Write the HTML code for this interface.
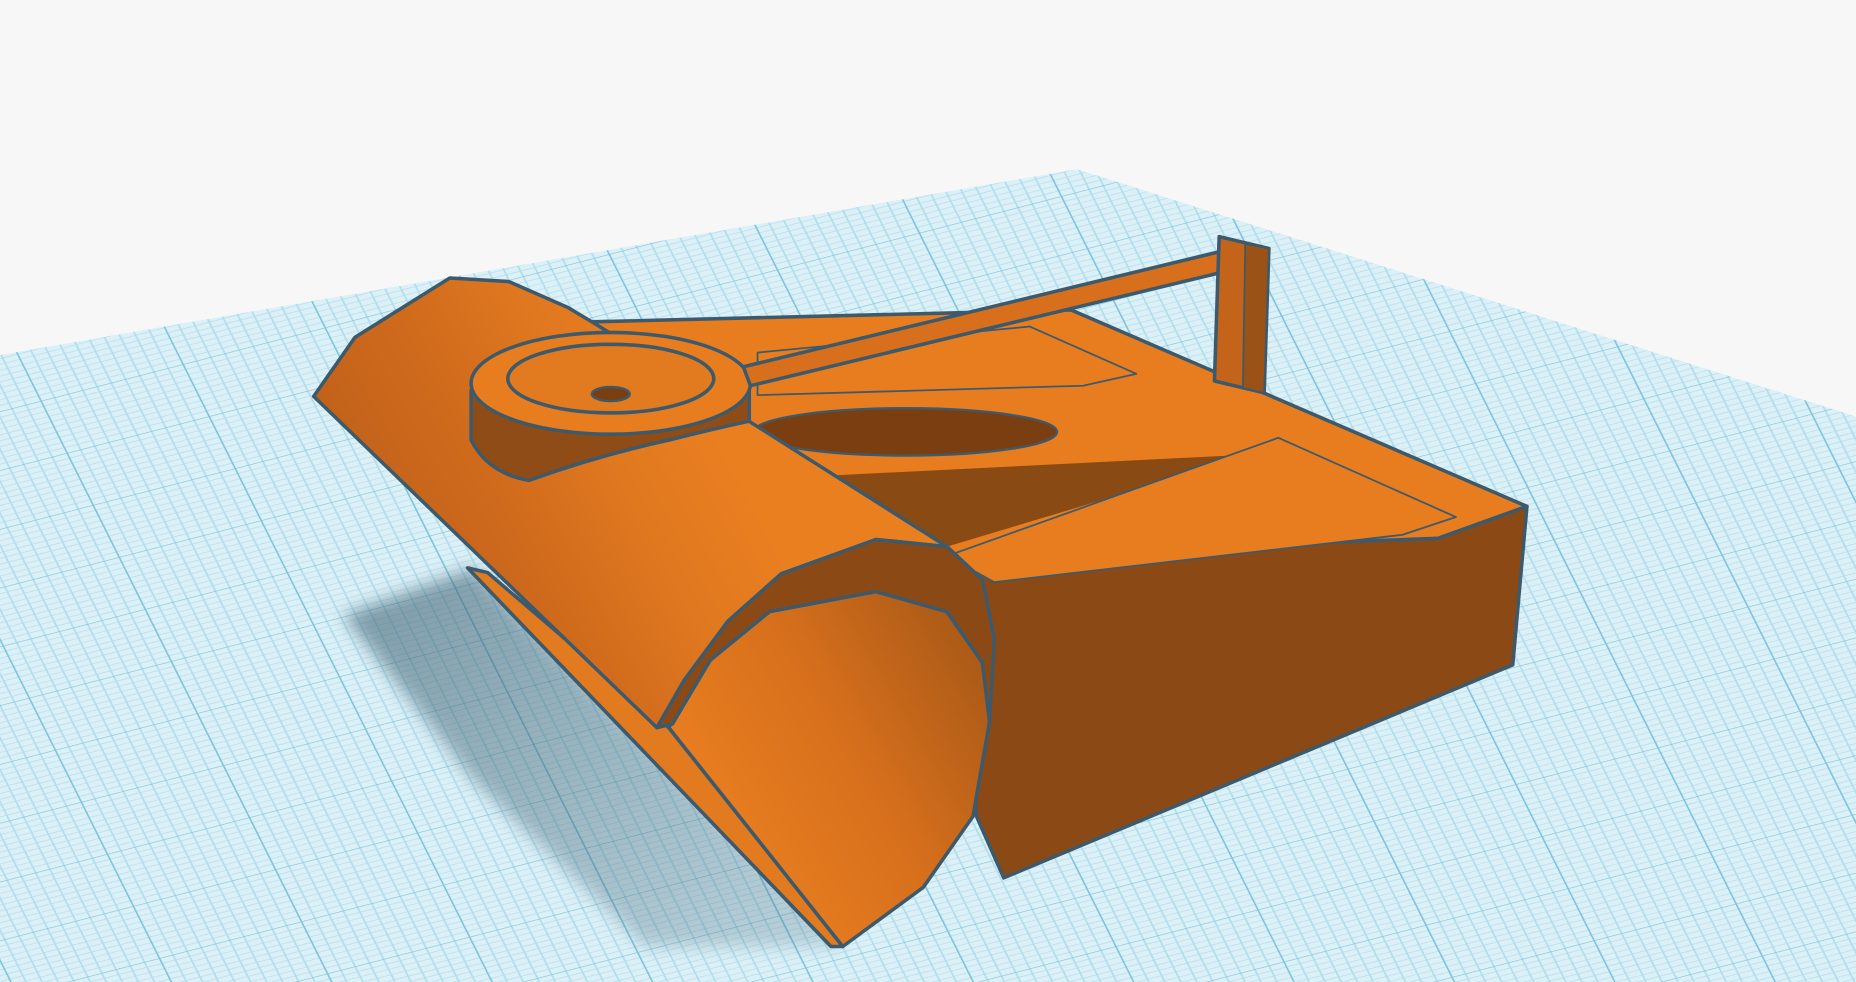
<!DOCTYPE html>
<html><head><meta charset="utf-8"><style>
html,body{margin:0;padding:0;width:1856px;height:982px;overflow:hidden;background:#f7f7f7}
svg{display:block}
</style></head><body>
<svg width="1856" height="982" viewBox="0 0 1568 830" preserveAspectRatio="none" xmlns="http://www.w3.org/2000/svg">
<defs>
<pattern id="g" width="100" height="100" patternUnits="userSpaceOnUse" patternTransform="matrix(1.2 -0.31 0.22 0.44 0 0)">
<rect width="100" height="100" fill="#dbf0f7"/>
<path d="M10 0V100M20 0V100M30 0V100M40 0V100M50 0V100M60 0V100M70 0V100M80 0V100M90 0V100M0 10H100M0 20H100M0 30H100M0 40H100M0 50H100M0 60H100M0 70H100M0 80H100M0 90H100" stroke="#b3ddec" stroke-width="1.2" fill="none"/>
<path d="M0 0V100M0 0H100" stroke="#7cc4dc" stroke-width="2.2" fill="none"/>
</pattern>
<linearGradient id="sh" x1="0" y1="0" x2="1" y2="1">
<stop offset="0" stop-color="#3d5f70" stop-opacity="0.6"/><stop offset="1" stop-color="#3d5f70" stop-opacity="0.2"/>
</linearGradient>
<linearGradient id="cyl" gradientUnits="userSpaceOnUse" x1="300" y1="420" x2="560" y2="280">
<stop offset="0" stop-color="#c0611a"/><stop offset="0.35" stop-color="#cf6a1c"/><stop offset="0.7" stop-color="#e07820"/><stop offset="1" stop-color="#ea7f20"/>
</linearGradient>
<linearGradient id="pipe" gradientUnits="userSpaceOnUse" x1="600" y1="700" x2="840" y2="560">
<stop offset="0" stop-color="#ea7f20"/><stop offset="0.5" stop-color="#d66f1c"/><stop offset="1" stop-color="#a85917"/>
</linearGradient>
</defs>
<rect width="1568" height="830" fill="#f7f7f7"/>
<polygon points="0,300 910,143 1568,352 1568,830 0,830" fill="url(#g)"/>
<polygon points="290,520 400,480 715,800 545,800 400,660" fill="url(#sh)" style="filter:blur(7px)"/>
<g stroke="#3d5a6c" stroke-width="3" stroke-linejoin="round">
<polygon points="500,272 905,262 1290,428 1215,455 835,495 640,370" fill="#e87d1f"/>
<polygon points="800,470 1215,455 1290,428 1278,562 848,742 825,690" fill="#8b4a15"/>
<polygon points="640,298 870,276 960,316 915,326 640,334" fill="#e87d1f" stroke-width="1.5"/>
<ellipse cx="765" cy="365" rx="128" ry="20" fill="#7a3e10" stroke-width="2"/>
<polygon points="700,402 1060,384 800,462" fill="#8a4a14" stroke="none"/>
<polygon points="800,470 1080,370 1230,437 1185,452 840,492" fill="#e87d1f" stroke-width="1.5"/>
<polygon points="395,480 412,484 565,615 712,800 702,800" fill="#e27a1f"/>
<path d="M565,615 L600,558 L650,517 L740,500 L800,517 L830,560 L836,610 L822,690 L780,750 L712,800 Z" fill="url(#pipe)"/>
<polygon points="265,335 300,285 380,235 430,238 480,260 505,275 800,462 740,456 660,485 615,525 578,575 555,615" fill="url(#cyl)"/>
<path d="M555,615 L578,575 L615,525 L660,485 L740,456 L800,462 L830,490 L840,540 L836,610 L830,560 L800,517 L740,500 L650,517 L600,558 L568,612 Z" fill="#8b4a15"/>
<path d="M398,330 L398,372 Q412,400 447,406 Q505,385 565,372 Q605,362 633,356 L633,322 Z" fill="#8f4c16"/>
<ellipse cx="516" cy="324" rx="118" ry="43" fill="#e87d1f"/>
<ellipse cx="516" cy="320" rx="87" ry="29" fill="#e27a1f"/>
<ellipse cx="516" cy="333" rx="16" ry="6" fill="#7a3e10" stroke-width="2"/>
<polygon points="628,310 1050,208 1058,224 634,326" fill="#d86f1c"/>
<polygon points="1030,200 1072,210 1068,332 1026,322" fill="#c4641a"/>
<polygon points="1052,206 1072,210 1068,332 1050,328" fill="#9a5217" stroke-width="1.5"/>
</g>
</svg>
</body></html>
